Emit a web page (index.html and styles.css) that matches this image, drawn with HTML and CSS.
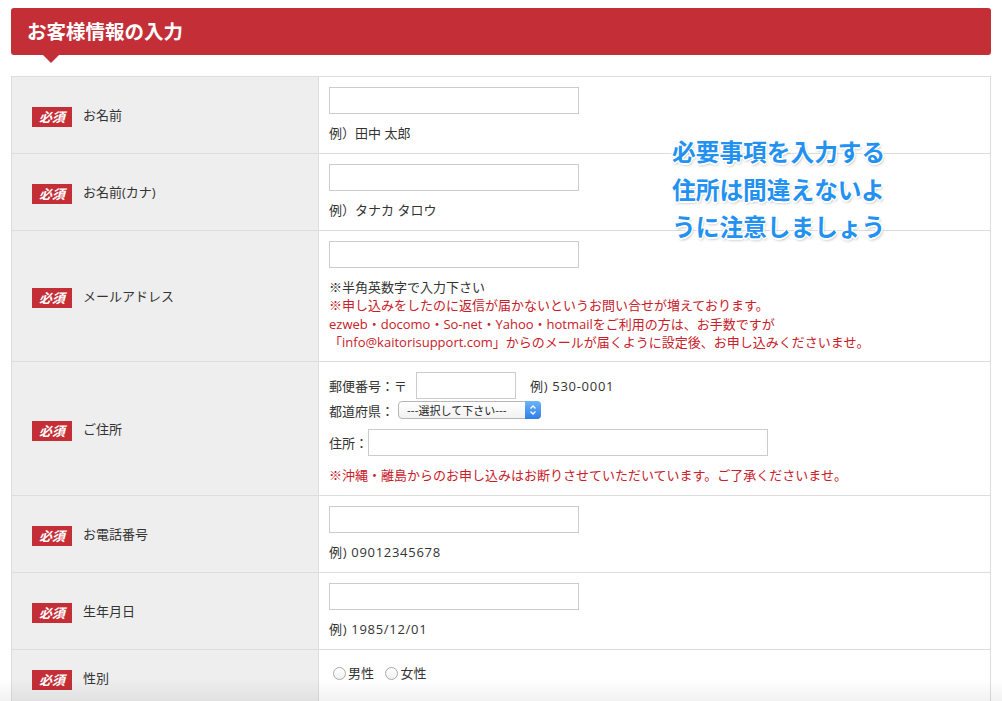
FILE: index.html
```html
<!DOCTYPE html>
<html lang="ja">
<head>
<meta charset="utf-8">
<title>お客様情報の入力</title>
<link rel="stylesheet" href="styles.css">
</head>
<body>
<div class="page">
  <h2 class="heading">お客様情報の入力</h2>
  <table class="form">
    <tr class="row-std">
      <th><span class="req">必須</span><span class="lbl">お名前</span></th>
      <td><input class="text" type="text"><p class="ex">例）田中 太郎</p></td>
    </tr>
    <tr class="row-std">
      <th><span class="req">必須</span><span class="lbl">お名前(カナ)</span></th>
      <td><input class="text" type="text"><p class="ex">例）タナカ タロウ</p></td>
    </tr>
    <tr>
      <th><span class="req">必須</span><span class="lbl">メールアドレス</span></th>
      <td>
        <input class="text" type="text">
        <div class="notes">
          <p>※半角英数字で入力下さい</p>
          <p class="red">※申し込みをしたのに返信が届かないというお問い合せが増えております。</p>
          <p class="red">ezweb・docomo・So-net・Yahoo・hotmailをご利用の方は、お手数ですが</p>
          <p class="red">「info@kaitorisupport.com」からのメールが届くように設定後、お申し込みくださいませ。</p>
        </div>
      </td>
    </tr>
    <tr>
      <th><span class="req">必須</span><span class="lbl">ご住所</span></th>
      <td>
        <div class="zip-line">
          <span>郵便番号：〒</span>
          <input class="text zip" type="text">
          <span class="zip-ex num">例) 530-0001</span>
        </div>
        <div class="pref-line">
          <span>都道府県：</span>
          <span class="select">
            <select><option>---選択して下さい---</option></select>
            <span class="arrows"><svg width="8" height="12" viewBox="0 0 8 12"><path d="M1.5 4.5 L4 2 L6.5 4.5 M1.5 7.5 L4 10 L6.5 7.5" fill="none" stroke="#fff" stroke-width="1.3"/></svg></span>
          </span>
        </div>
        <div class="addr-line">
          <span>住所：</span>
          <input class="text addr" type="text">
        </div>
        <p class="red addr-note">※沖縄・離島からのお申し込みはお断りさせていただいています。ご了承くださいませ。</p>
      </td>
    </tr>
    <tr class="row-std">
      <th><span class="req">必須</span><span class="lbl">お電話番号</span></th>
      <td><input class="text" type="text"><p class="ex num">例) 09012345678</p></td>
    </tr>
    <tr class="row-std">
      <th><span class="req">必須</span><span class="lbl">生年月日</span></th>
      <td><input class="text" type="text"><p class="ex num">例) 1985/12/01</p></td>
    </tr>
    <tr class="row-last">
      <th><span class="req">必須</span><span class="lbl">性別</span></th>
      <td>
        <label class="radio"><input type="radio" name="sex">男性</label>
        <label class="radio"><input type="radio" name="sex">女性</label>
      </td>
    </tr>
  </table>
  <div class="callout">必要事項を入力する<br>住所は間違えないよ<br>うに注意しましょう</div>
</div>
<div class="fade"></div>
</body>
</html>
```

FILE: styles.css
```css
* { box-sizing: border-box; }
html, body { margin: 0; padding: 0; background: #fff; }
body {
  font-family: "Open Sans", "Noto Sans CJK JP", sans-serif;
  color: #333;
  font-size: 13px;
  overflow: hidden;
}
.page {
  position: relative;
  padding: 8px 11px 0 11px;
}
.heading {
  position: relative;
  margin: 0;
  height: 47px;
  line-height: 46px;
  background: #c42e37;
  color: #fff;
  border-radius: 3px;
  padding-left: 16px;
  font-family: "Noto Sans CJK JP", sans-serif;
  font-size: 19.5px;
  font-weight: 700;
}
.heading::after {
  content: "";
  position: absolute;
  left: 32px;
  top: 47px;
  border-left: 8.5px solid transparent;
  border-right: 8.5px solid transparent;
  border-top: 8px solid #c42e37;
}
.form {
  margin-top: 21px;
  width: 980px;
  border-collapse: collapse;
  border: 1px solid #ddd;
}
.form th, .form td {
  border: 1px solid #ddd;
}
.form th {
  width: 307px;
  background: #eee;
  text-align: left;
  font-weight: 400;
  padding: 0 0 0 20px;
  vertical-align: middle;
}
.form td {
  padding: 10px;
  vertical-align: top;
  background: #fff;
}
.req {
  display: inline-block;
  vertical-align: middle;
  width: 40px;
  height: 20px;
  line-height: 20px;
  background: #c42e37;
  color: #fff;
  font-family: "Noto Sans CJK JP", sans-serif;
  font-size: 13px;
  font-weight: 700;
  font-style: italic;
  text-align: center;
  margin-top: 4px;
}
.lbl {
  display: inline-block;
  vertical-align: middle;
  margin-left: 11px;
  font-size: 13px;
  line-height: 20px;
}
.text {
  display: block;
  width: 250px;
  height: 27px;
  border: 1px solid #ccc;
  background: #fff;
  margin: 0;
  padding: 0 4px;
  font: inherit;
}
.ex {
  margin: 9px 0 0 0;
  line-height: 20px;
  font-size: 13px;
}
.num { letter-spacing: 0.7px; }
.notes {
  margin-top: 10px;
  font-size: 13px;
}
.notes p {
  margin: 0;
  line-height: 18.25px;
  white-space: nowrap;
}
.red { color: #c8202a; }
.zip-line {
  display: flex;
  align-items: center;
}
.zip-line .text.zip {
  width: 100px;
  margin-left: 9px;
}
.zip-ex { margin-left: 14px; }
.pref-line {
  display: flex;
  align-items: center;
  margin-top: 2px;
  height: 18px;
}
.select {
  position: relative;
  display: inline-block;
  margin-left: 4px;
  width: 143px;
  height: 18px;
}
.select select {
  -webkit-appearance: none;
  appearance: none;
  width: 143px;
  height: 18px;
  border: 1px solid #b5b5b5;
  border-radius: 4px;
  background: linear-gradient(#fff, #f2f2f2);
  font-family: "Noto Sans CJK JP", sans-serif;
  font-size: 11px;
  line-height: 16px;
  padding: 0 18px 0 8px;
  color: #222;
  margin: 0;
}
.arrows {
  position: absolute;
  right: 0;
  top: 0;
  width: 16px;
  height: 18px;
  border-radius: 0 4px 4px 0;
  background: linear-gradient(#6cb3fa, #2f7fe6);
  display: flex;
  align-items: center;
  justify-content: center;
}
.addr-line {
  display: flex;
  align-items: center;
  margin-top: 10px;
}
.addr-line .text.addr {
  width: 400px;
  margin-left: 0;
}
.addr-note {
  margin: 9px 0 0 0;
  line-height: 20px;
  font-size: 13px;
}
.row-last td {
  padding: 13px 10px 23px 14px;
}
.radio {
  display: inline-flex;
  align-items: center;
  line-height: 20px;
  margin-right: 8px;
  font-size: 13px;
}
.radio input {
  -webkit-appearance: none;
  appearance: none;
  width: 13px;
  height: 13px;
  margin: 0 2px 0 0;
  border: 1px solid #aaa;
  border-radius: 50%;
  background: linear-gradient(#fff, #f0f0f0);
}
.callout {
  position: absolute;
  left: 672px;
  top: 133px;
  font-family: "Noto Sans CJK JP", sans-serif;
  font-size: 23.7px;
  font-weight: 700;
  line-height: 37.5px;
  color: #2291f2;
  text-shadow:
    -1px -1px 0 #fff, 1px -1px 0 #fff, -1px 1px 0 #fff, 1px 1px 0 #fff,
    0 -1.5px 0 #fff, 0 1.5px 0 #fff, -1.5px 0 0 #fff, 1.5px 0 0 #fff,
    1px 2px 3px rgba(0,0,0,0.35);
}
.fade {
  position: fixed;
  left: 0;
  right: 0;
  bottom: 0;
  height: 22px;
  background: linear-gradient(rgba(0,0,0,0), rgba(0,0,0,0.05));
  pointer-events: none;
}
```
